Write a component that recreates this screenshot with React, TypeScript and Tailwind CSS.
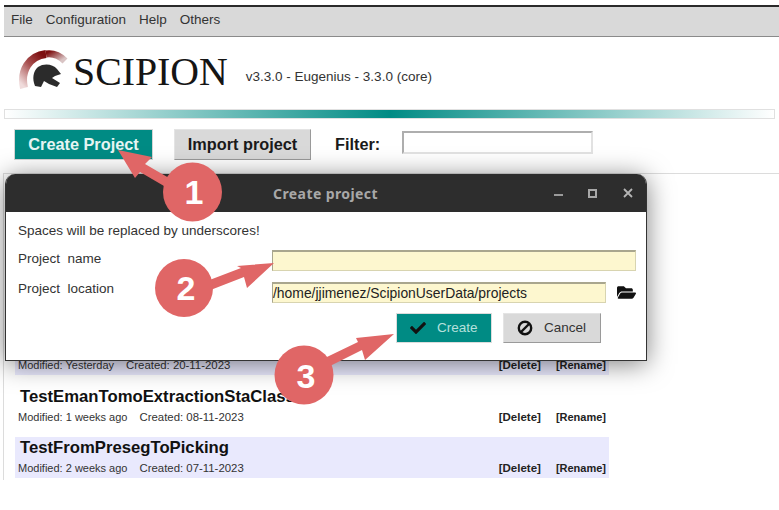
import { FaCheck, FaFolderOpen } from 'react-icons/fa';

const menuItems = ['File', 'Configuration', 'Help', 'Others'];

const projects = [
  { name: '', modified: 'Yesterday', created: '20-11-2023', shaded: true },
  { name: 'TestEmanTomoExtractionStaClasses', modified: '1 weeks ago', created: '08-11-2023', shaded: false },
  { name: 'TestFromPresegToPicking', modified: '2 weeks ago', created: '07-11-2023', shaded: true },
];

function Logo() {
  return (
    <svg width="52" height="52" viewBox="0 0 52 52" className="mt-[10px] shrink-0">
      <defs>
        <linearGradient id="arcLeft" x1="0.8" y1="0" x2="0.1" y2="1">
          <stop offset="0" stopColor="#7d0f10" />
          <stop offset="0.45" stopColor="#a85050" />
          <stop offset="1" stopColor="#f0dcdc" />
        </linearGradient>
        <linearGradient id="arcRight" x1="0" y1="0" x2="1" y2="0.6">
          <stop offset="0" stopColor="#7d0f10" />
          <stop offset="1" stopColor="#d9c4c4" />
        </linearGradient>
      </defs>
      <path d="M6 41 C2 24 11 9 28 7" fill="none" stroke="url(#arcLeft)" strokeWidth="8" />
      <path d="M28 7 C35 6 42 9 47 14" fill="none" stroke="url(#arcRight)" strokeWidth="7" />
      <path
        d="M17 39 C14 32 15 24 20 20 C26 16 35 17 39 22 L43 27 L37 29 L34 31 L42 36 L39 40 L31 37 L26 34 L23 40 Z"
        fill="#2b2b2b"
      />
    </svg>
  );
}

function BanIcon() {
  return (
    <svg width="16" height="16" viewBox="0 0 16 16" className="shrink-0">
      <circle cx="8" cy="8" r="6.200" fill="none" stroke="#111" strokeWidth="2.400" />
      <path d="M12 4 L4 12" stroke="#111" strokeWidth="2.400" />
    </svg>
  );
}

function ProjectRow({ name, modified, created, shaded }: (typeof projects)[number]) {
  return (
    <div className={`h-[41px] pl-[3px] pr-[3px] ${shaded ? 'bg-[#e9e9fd]' : ''}`}>
      <div className="h-[21px] pl-[2px] text-[16.7px] leading-[21px] font-bold text-[#111]">{name}</div>
      <div className="flex h-[20px] items-baseline text-[11px] leading-[21px] text-[#333]">
        <span>Modified: {modified}</span>
        <span className="ml-[12px] text-[11.4px]">Created: {created}</span>
        <span className="ml-auto text-[11.5px] font-bold text-[#222]">[Delete]</span>
        <span className="ml-[15px] font-bold text-[#222]">[Rename]</span>
      </div>
    </div>
  );
}

function Annotations() {
  return (
    <svg width="779" height="510" viewBox="0 0 779 510" className="absolute top-0 left-0">
      <g fill="#e06666">
        <path d="M118 150 L152 157 L145 164 L193 192 L188 200 L140 172 L135 178 Z" />
        <circle cx="192.500" cy="192" r="29.500" />
        <path d="M274 263 L247 288 L244 277 L190 298 L186 289 L241 268 L237 266 Z" />
        <circle cx="184" cy="288" r="29" />
        <path d="M394 334 L365 360 L362 350 L306 378 L302 369 L358 342 L356 338 Z" />
        <circle cx="304" cy="375" r="29.500" />
      </g>
    </svg>
  );
}

function Badge({ label, className }: { label: string; className: string }) {
  return (
    <span
      className={`absolute flex h-[40px] w-[40px] items-center justify-center text-[34px] font-bold text-white ${className}`}
    >
      {label}
    </span>
  );
}

function CreateDialog() {
  return (
    <div className="absolute top-[174px] left-[5px] h-[187px] w-[642px] overflow-hidden rounded-t-[10px] border-x border-b border-[#333] bg-white shadow-[0_3px_26px_rgba(0,0,0,0.5)]">
      <div className="relative flex h-[38px] items-center justify-center bg-[#2d2d2d] pr-[1px] font-['Noto_Sans',sans-serif] text-[14px] font-bold tracking-[0.4px] text-[#a8a8a8]">
        Create project
        <div className="absolute top-0 right-[12px] flex h-full items-center gap-[25px]">
          <span className="mt-[4px] h-[2px] w-[9px] bg-[#9a9a9a]" />
          <span className="h-[9px] w-[9px] border-2 border-[#a8a8a8]" />
          <svg width="12" height="12" viewBox="0 0 12 12">
            <path d="M2 2 L10 10 M10 2 L2 10" stroke="#b5b5b5" strokeWidth="1.800" />
          </svg>
        </div>
      </div>

      <div className="pt-[9px] pl-[12px] text-[13.5px] text-[#333]">
        <div className="h-[20px] leading-[20px]">Spaces will be replaced by underscores!</div>
        <div className="mt-[9px] flex h-[20px]">
          <span className="w-[254px] whitespace-pre leading-[18px]">Project  name</span>
          <input
            readOnly
            className="h-[21px] w-[364px] border border-t-2 border-[#d8d4b0] border-t-[#a9a68e] border-l-[#a9a68e] bg-[#fdf7cf] outline-none"
          />
        </div>
        <div className="mt-[12px] flex h-[20px] items-start">
          <span className="-mt-[2px] w-[254px] whitespace-pre leading-[18px]">Project  location</span>
          <div className="h-[21px] w-[334px] border border-t-2 border-[#d8d4b0] border-t-[#a9a68e] border-l-[#a9a68e] bg-[#fdf7cf] pl-[0px] text-[13.9px] leading-[19px] text-[#222]">
            /home/jjimenez/ScipionUserData/projects
          </div>
          <FaFolderOpen className="mt-[1px] ml-[11px] text-[19px] text-[#111]" />
        </div>
        <div className="mt-[11px] flex">
          <button className="ml-[378px] flex h-[30px] w-[96px] items-center border border-[#dcdcdc] bg-[#008b84] pl-[13px] text-[13.5px] text-[#b6e0dc]">
            <FaCheck className="text-[16px] text-[#111]" />
            <span className="ml-[11px]">Create</span>
          </button>
          <button className="ml-[11px] flex h-[30px] w-[98px] items-center border border-[#e4e4e4] border-r-[#9a9a9a] border-b-[#9a9a9a] bg-[#d9d9d9] pl-[13px] text-[13.5px] text-[#333]">
            <BanIcon />
            <span className="ml-[11px]">Cancel</span>
          </button>
        </div>
      </div>
    </div>
  );
}

export default function App() {
  return (
    <div className="relative h-[510px] w-[779px] overflow-hidden bg-white pt-[5px] font-['Liberation_Sans',Arial,sans-serif]">
      <div className="ml-[4px]">
        {/* MENU */}
        <div className="flex h-[32px] items-center gap-[13px] border-t-2 border-b border-t-[#2a2a2a] border-b-[#8a8a8a] bg-[#d9d9d9] pb-[3px] pl-[7px] text-[13.5px] text-[#333]">
          {menuItems.map((item) => (
            <span key={item}>{item}</span>
          ))}
        </div>

        {/* LOGO */}
        <div className="flex h-[72px] items-start pl-[14px]">
          <Logo />
          <span className="mt-[13px] ml-[3px] font-['Liberation_Serif',serif] text-[39.800px] leading-[44px] text-[#151515]">
            SCIPION
          </span>
          <span className="mt-[31px] ml-[18px] text-[13.500px] leading-[18px] text-[#333]">
            v3.3.0 - Eugenius - 3.3.0 (core)
          </span>
        </div>

        {/* GRADIENT BAR */}
        <div className="h-[10px] w-[771px] border border-[#e0e0e0] bg-linear-to-r/srgb from-white via-[#008b84] to-white" />

        {/* TOOLBAR */}
        <div className="flex h-[54px] items-start pt-[10px] pl-[10px] text-[16.300px] font-bold">
          <button className="h-[31px] w-[139px] border border-[#d5d5d5] bg-[#008b84] text-[#e6f5f3]">
            Create Project
          </button>
          <button className="ml-[21px] h-[31px] w-[137px] border border-[#e4e4e4] border-r-[#9a9a9a] border-b-[#9a9a9a] bg-[#d9d9d9] text-[#1a1a1a]">
            Import project
          </button>
          <span className="ml-[24px] leading-[30px] text-[#1a1a1a]">Filter:</span>
          <input
            readOnly
            className="mt-[2px] ml-[22px] h-[23px] w-[191px] border-2 border-[#e2e2e2] border-t-[#aeaeae] border-l-[#aeaeae] bg-white outline-none"
          />
        </div>

        {/* PROJECT LIST */}
        <div className="-ml-[1px] h-[307px] w-[776px] border-t border-l border-[#dcdcdc] pt-[160px] pl-[11px]">
          <div className="flex w-[594px] flex-col gap-[10.500px]">
            {projects.map((project, i) => (
              <ProjectRow key={i} {...project} />
            ))}
          </div>
        </div>
      </div>

      <CreateDialog />

      {/* ANNOTATIONS */}
      <Annotations />
      <Badge label="1" className="top-[172px] left-[174px]" />
      <Badge label="2" className="top-[268px] left-[166px]" />
      <Badge label="3" className="top-[356px] left-[286px]" />
    </div>
  );
}
